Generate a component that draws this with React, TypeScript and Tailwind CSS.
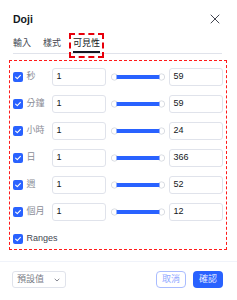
import React from "react";

const font = { fontFamily: '"Liberation Sans", "Noto Sans CJK TC", sans-serif' };

function Check() {
  return (
    <div className="w-[10px] h-[10px] rounded-[2px] bg-[#2962ff] flex items-center justify-center shrink-0">
      <svg width="8" height="8" viewBox="0 0 8 8">
        <path d="M1.6 4.1 L3.3 5.7 L6.4 2.4" fill="none" stroke="#ffffff" strokeWidth="1.1" strokeLinecap="round" strokeLinejoin="round" />
      </svg>
    </div>
  );
}

function Slider() {
  return (
    <svg width="54" height="18" viewBox="0 0 54 18" className="shrink-0">
      <circle cx="3.5" cy="9" r="3.2" fill="#ffffff" stroke="#d1d4dc" strokeWidth="0.8" />
      <circle cx="50.5" cy="9" r="3.2" fill="#ffffff" stroke="#d1d4dc" strokeWidth="0.8" />
      <rect x="5.5" y="7" width="43" height="4" fill="#2962ff" />
    </svg>
  );
}

function Row({ label, max }: { label: string; max: string }) {
  return (
    <div className="flex items-center h-[18px]">
      <Check />
      <div className="ml-[4px] w-[25px] text-[9px] leading-none text-[#8a8d96] whitespace-nowrap">{label}</div>
      <div className="w-[54px] h-[18px] border border-[#e0e3eb] rounded-[3px] flex items-center pl-[4px] text-[9px] text-[#131722]">1</div>
      <div className="ml-[5px]">
        <Slider />
      </div>
      <div className="ml-[4px] w-[54px] h-[18px] border border-[#e0e3eb] rounded-[3px] flex items-center pl-[4px] text-[9px] text-[#131722]">{max}</div>
    </div>
  );
}

export default function App() {
  const rows: [string, string][] = [
    ["秒", "59"],
    ["分鐘", "59"],
    ["小時", "24"],
    ["日", "366"],
    ["週", "52"],
    ["個月", "12"],
  ];
  return (
    <div className="w-[237px] h-[300px] bg-white flex flex-col overflow-hidden" style={font}>
      <div className="h-[36px] pt-[2px] flex items-center justify-between pl-[13px] pr-[17px]">
        <div className="text-[10.5px] font-bold text-[#131722] leading-none">Doji</div>
        <svg width="10" height="10" viewBox="0 0 10 10">
          <path d="M1 1 L9 9 M9 1 L1 9" stroke="#434651" strokeWidth="1" strokeLinecap="round" />
        </svg>
      </div>
      <div className="ml-[13px] w-[209px] flex gap-[12px] border-b border-[#e0e3eb] h-[18px]">
        <div className="text-[9px] leading-[14px] h-[14px] text-[#434651]">輸入</div>
        <div className="text-[9px] leading-[14px] h-[14px] text-[#434651]">樣式</div>
        <div className="relative">
          <div className="text-[9px] leading-[14px] text-[#131722] pb-[1px] border-b-2 border-[#131722]">可見性</div>
          <div className="absolute z-10 left-[-4px] right-[-4px] top-[-3px] bottom-[-5px] border-2 border-dashed border-red-600" />
        </div>
      </div>
      <div className="ml-[9px] w-[218px] mt-[6px] h-[190px] border-[1.5px] border-dashed border-[#ff1a1a] pt-[6.5px] pl-[2.5px] pr-[2.5px] flex flex-col gap-[9px]">
        {rows.map(([l, m]) => (
          <Row key={l} label={l} max={m} />
        ))}
        <div className="flex items-center h-[18px]">
          <Check />
          <div className="ml-[4px] text-[9px] leading-none text-[#434651]">Ranges</div>
        </div>
      </div>
      <div className="mt-[11px] border-t border-[#f0f3fa] pt-[9px] flex items-center pl-[12px] pr-[14px]">
        <div className="w-[54px] h-[17px] border border-[#e0e3eb] rounded-[3px] flex items-center justify-between pl-[4px] pr-[5px]">
          <span className="text-[9px] text-[#787b86] leading-none">預設值</span>
          <svg width="6" height="4" viewBox="0 0 6 4">
            <path d="M0.7 0.8 L3 3 L5.3 0.8" fill="none" stroke="#787b86" strokeWidth="0.9" />
          </svg>
        </div>
        <div className="ml-auto flex gap-[7px]">
          <div className="w-[30px] h-[17px] border border-[#a9bcff] rounded-[4px] flex items-center justify-center text-[9px] text-[#8fa8ff] leading-none">取消</div>
          <div className="w-[30px] h-[17px] bg-[#2962ff] rounded-[4px] flex items-center justify-center text-[9px] text-[#e8eeff] leading-none">確認</div>
        </div>
      </div>
    </div>
  );
}
